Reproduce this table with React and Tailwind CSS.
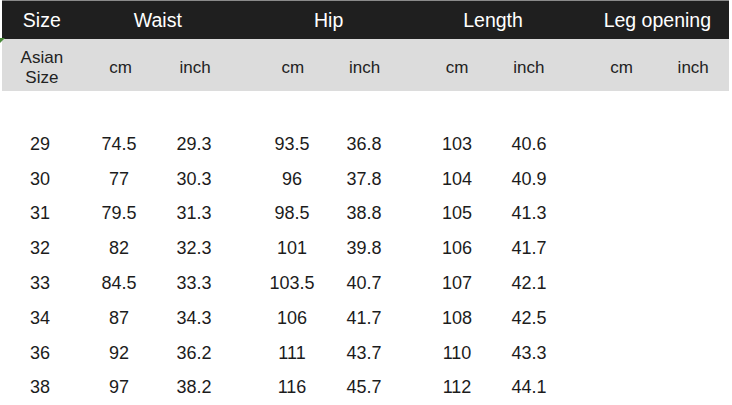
import React from 'react';

const cols = [
  'w-[72px] ml-[4px]',
  'w-[72px] ml-[7px]',
  'w-[72px] ml-[3px]',
  'w-[72px] ml-[26px]',
  'w-[72px]',
  'w-[72px] ml-[21px]',
  'w-[72px]',
  'w-[72px] ml-[21px]',
  'w-[72px]',
];

const groups = [
  { label: 'Size', cls: 'w-[72px] ml-[4px]' },
  { label: 'Waist', cls: 'w-[147px] ml-[7px]' },
  { label: 'Hip', cls: 'w-[144px] ml-[26px]' },
  { label: 'Length', cls: 'w-[144px] ml-[21px]' },
  { label: 'Leg opening', cls: 'w-[144px] ml-[21px]' },
];

const rows = [
  ['29', '74.5', '29.3', '93.5', '36.8', '103', '40.6'],
  ['30', '77', '30.3', '96', '37.8', '104', '40.9'],
  ['31', '79.5', '31.3', '98.5', '38.8', '105', '41.3'],
  ['32', '82', '32.3', '101', '39.8', '106', '41.7'],
  ['33', '84.5', '33.3', '103.5', '40.7', '107', '42.1'],
  ['34', '87', '34.3', '106', '41.7', '108', '42.5'],
  ['36', '92', '36.2', '111', '43.7', '110', '43.3'],
  ['38', '97', '38.2', '116', '45.7', '112', '44.1'],
];

const App = () => {
  return (
    <div
      className="w-[732px] h-[405px] bg-white relative overflow-hidden"
      style={{ fontFamily: '"Liberation Sans", Arial, sans-serif' }}
    >
      {/* header bar */}
      <div className="ml-[2px] mr-[3px] border-t border-[#8a8a8a] bg-[#1f1f1f] h-[39px] flex items-center pt-[2px] text-white text-[19.5px]">
        {groups.map((g) => (
          <div key={g.label} className={`${g.cls} text-center`}>
            {g.label}
          </div>
        ))}
      </div>

      {/* unit row */}
      <div className="ml-[2px] mr-[3px] bg-[#dcdcdc] h-[52px] flex items-center pt-[5px] text-[#222] text-[17px]">
        <div className={`${cols[0]} text-center leading-[20px] -ml-[2px]`}>
          Asian
          <br />
          Size
        </div>
        {['cm', 'inch', 'cm', 'inch', 'cm', 'inch', 'cm', 'inch'].map((u, i) => (
          <div key={i} className={`${cols[i + 1]} text-center`}>
            {u}
          </div>
        ))}
      </div>

      {/* tiny green corner mark */}
      <div className="absolute left-0 top-[38px] w-0 h-0 border-t-[5px] border-t-[#4a8a3a] border-r-[5px] border-r-transparent" />

      {/* data rows */}
      <div className="mt-[36px] text-[#1c1c1c] text-[18px]">
        {rows.map((r) => (
          <div key={r[0]} className="h-[34.8px] flex items-center">
            {r.map((v, i) => (
              <div key={i} className={`${cols[i]} text-center`}>
                {v}
              </div>
            ))}
          </div>
        ))}
      </div>
    </div>
  );
};

export default App;
